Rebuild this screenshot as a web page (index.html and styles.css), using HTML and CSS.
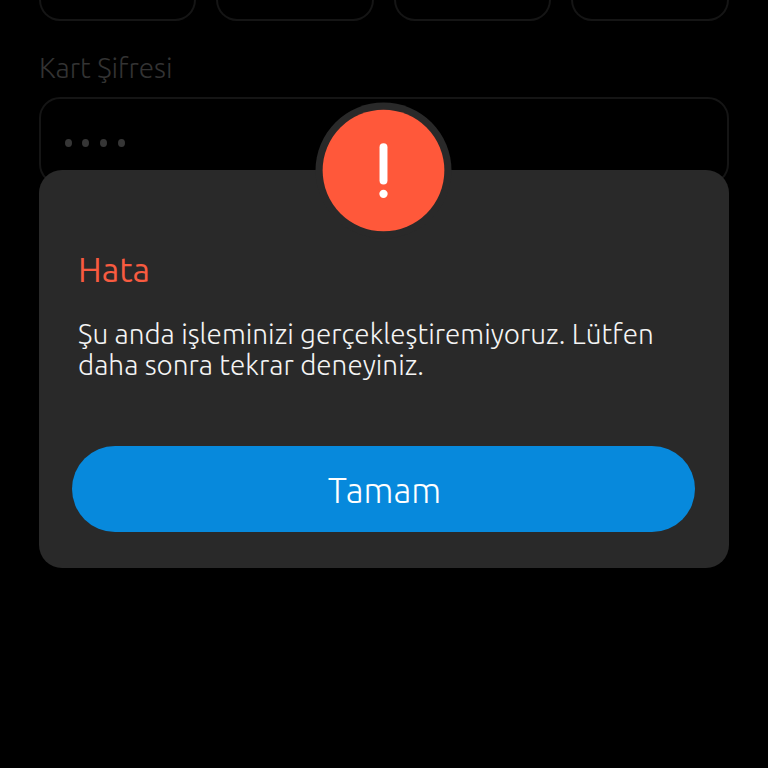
FILE: index.html
```html
<!DOCTYPE html>
<html lang="tr">
<head>
<meta charset="utf-8">
<title>Kart Şifresi</title>
<link rel="stylesheet" href="styles.css">
</head>
<body>
<main class="form">
  <div class="boxes">
    <div class="box"></div><div class="box"></div><div class="box"></div><div class="box"></div>
  </div>
  <div class="label">Kart Şifresi</div>
  <div class="pin"><i class="dot"></i><i class="dot"></i><i class="dot"></i><i class="dot"></i></div>
</main>
<section class="dialog" role="alertdialog">
  <svg class="badge" viewBox="0 0 138 138" aria-hidden="true">
    <circle class="ring" cx="69" cy="69" r="68.5"/>
    <circle class="disc" cx="69" cy="69" r="61.3"/>
    <rect class="mark" x="65" y="41.5" width="8" height="41.5" rx="4"/>
    <circle class="mark" cx="69" cy="92.5" r="4.2"/>
  </svg>
  <h1 class="title">Hata</h1>
  <p class="message">Şu anda işleminizi gerçekleştiremiyoruz. Lütfen<br>daha sonra tekrar deneyiniz.</p>
  <button class="confirm">Tamam</button>
</section>
</body>
</html>
```
FILE: styles.css
```css
* { box-sizing: border-box; }
body {
  margin: 0;
  height: 768px;
  overflow: hidden;
  background: #000;
  font-family: Ubuntu, "Open Sans", "Noto Sans", sans-serif;
}
.form { padding: 0 39.5px 0 39px; }
.boxes { display: flex; gap: 20px; height: 21px; }
.box {
  flex: 1;
  height: 21px;
  border: 2px solid #151515;
  border-top: 0;
  border-radius: 0 0 21px 21px;
}
.label {
  margin-top: 27px;
  height: 40px;
  line-height: 40px;
  font-size: 27.9px;
  font-weight: 300;
  color: #333;
  white-space: nowrap;
}
.pin {
  display: flex;
  gap: 10.7px;
  margin-top: 9px;
  height: 88px;
  padding: 40px 0 0 23.5px;
  border: 2px solid #151515;
  border-radius: 21px;
}
.dot { width: 7px; height: 8px; border-radius: 50%; background: #363636; }
.dialog {
  position: absolute;
  left: 39px;
  top: 170px;
  width: 690px;
  height: 398px;
  padding: 75px 33px 0;
  border-radius: 23px;
  background: #292929;
}
.badge { position: absolute; left: 275.5px; top: -68px; width: 137px; height: 137px; }
.ring { fill: #292929; }
.disc { fill: #ff583a; }
.mark { fill: #fff; }
.title {
  margin: 0 0 0 6px;
  height: 48px;
  line-height: 48px;
  font-size: 34px;
  font-weight: 400;
  color: #f85b40;
}
.message {
  margin: 25px 0 0 6px;
  height: 62px;
  line-height: 31px;
  font-size: 27.9px;
  font-weight: 300;
  color: #f4f4f4;
  white-space: nowrap;
}
.confirm {
  display: block;
  width: 623px;
  height: 86px;
  margin: 66px 0 0;
  padding: 1px 0 0 2px;
  border: 0;
  border-radius: 43px;
  background: #0789dc;
  color: #fff;
  font: 300 35px Ubuntu, "Open Sans", "Noto Sans", sans-serif;
}
```
